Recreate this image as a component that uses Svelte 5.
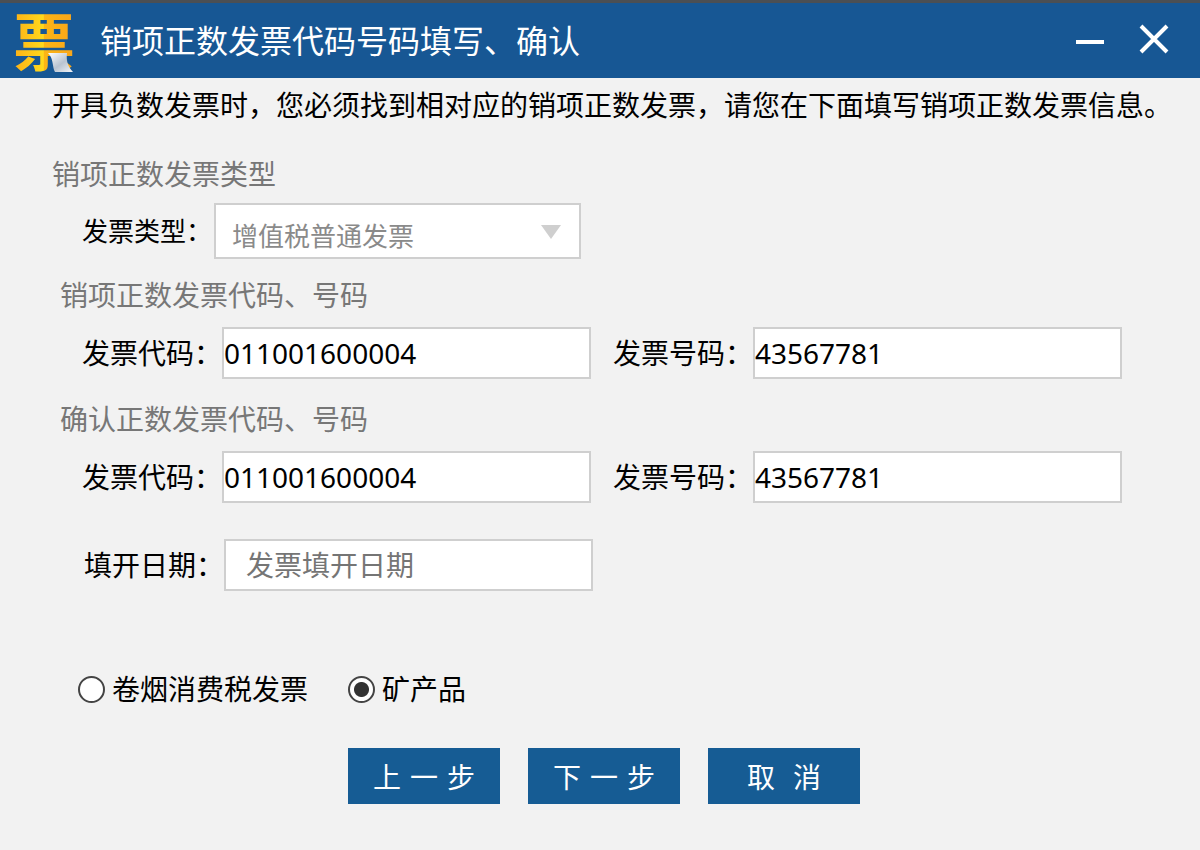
<script>
  let invoiceType = 'normal';
  let kind = 'mineral';
  let fillDate = '';

  let groups = [
    { id: 'first', title: '销项正数发票代码、号码', code: '011001600004', number: '43567781' },
    { id: 'confirm', title: '确认正数发票代码、号码', code: '011001600004', number: '43567781' }
  ];

  const kinds = [
    { value: 'tobacco', label: '卷烟消费税发票' },
    { value: 'mineral', label: '矿产品' }
  ];

  const actions = ['上 一 步', '下 一 步', '取  消'];
</script>

<main class="dialog">
  <header class="titlebar">
    <svg class="logo" viewBox="0 0 68 74" aria-hidden="true">
      <defs>
        <linearGradient id="gold" x1="0" y1="0" x2="1" y2="0">
          <stop offset="0" stop-color="#fbb017" />
          <stop offset="0.49" stop-color="#ffd91c" />
          <stop offset="0.5" stop-color="#fcb515" />
          <stop offset="1" stop-color="#f9a51b" />
        </linearGradient>
        <linearGradient id="paper" x1="0" y1="0" x2="1" y2="1">
          <stop offset="0" stop-color="#ffffff" />
          <stop offset="0.55" stop-color="#b9c3d0" />
          <stop offset="1" stop-color="#f4f6f9" />
        </linearGradient>
      </defs>
      <text class="logo-text" x="34" y="62" text-anchor="middle" fill="url(#gold)">票</text>
      <path d="M38 49 H57 C56 57 58 63 63 68 H45 C42 63 44 55 38 49 Z" fill="url(#paper)" />
    </svg>
    <h1>销项正数发票代码号码填写、确认</h1>
    <div class="win-btns">
      <button aria-label="最小化">
        <svg viewBox="0 0 30 30" width="30" height="30">
          <path d="M1 18 H29" stroke="#fff" stroke-width="4" />
        </svg>
      </button>
      <button aria-label="关闭">
        <svg viewBox="0 0 30 30" width="30" height="30">
          <path d="M2 2 L28 28 M28 2 L2 28" stroke="#fff" stroke-width="4" />
        </svg>
      </button>
    </div>
  </header>

  <p class="notice">开具负数发票时，您必须找到相对应的销项正数发票，请您在下面填写销项正数发票信息。</p>

  <h2 class="outer">销项正数发票类型</h2>
  <div class="row">
    <div class="field type">
      <label for="type">发票类型：</label>
      <div class="select-wrap">
        <select id="type" bind:value={invoiceType} disabled>
          <option value="normal">增值税普通发票</option>
        </select>
        <svg class="arrow" viewBox="0 0 20 14" aria-hidden="true">
          <path d="M0 0 H20 L10 14 Z" fill="#cfcfcf" />
        </svg>
      </div>
    </div>
  </div>

  {#each groups as group (group.id)}
    <section>
      <h2>{group.title}</h2>
      <div class="row">
        <div class="field">
          <label for="{group.id}-code">发票代码：</label>
          <input id="{group.id}-code" type="text" bind:value={group.code} />
        </div>
        <div class="field">
          <label for="{group.id}-number">发票号码：</label>
          <input id="{group.id}-number" type="text" bind:value={group.number} />
        </div>
      </div>
    </section>
  {/each}

  <div class="row date">
    <div class="field">
      <label for="date">填开日期：</label>
      <input id="date" type="text" placeholder="发票填开日期" bind:value={fillDate} />
    </div>
  </div>

  <div class="kinds">
    {#each kinds as k}
      <label>
        <input type="radio" name="kind" value={k.value} bind:group={kind} />
        <span>{k.label}</span>
      </label>
    {/each}
  </div>

  <div class="actions">
    {#each actions as action}
      <button>{action}</button>
    {/each}
  </div>
</main>

<style>
:global(body) {
  margin: 0;
  background: #f2f2f2;
}
.dialog {
  font-family: "Noto Sans", "Noto Sans CJK SC", sans-serif;
  font-size: 28px;
  line-height: 40px;
  color: #000;
  padding-bottom: 46px;
}
h1, h2, p {
  margin: 0;
  font-weight: 400;
}
input, select, button {
  font: inherit;
  box-sizing: border-box;
  border-radius: 0;
  margin: 0;
}

.titlebar {
  display: flex;
  align-items: center;
  height: 78px;
  box-sizing: border-box;
  border-top: 3px solid #4b4f54;
  padding: 0 31px 0 10px;
  background: #175794;
  color: #fff;
}
.logo {
  width: 68px;
  height: 74px;
  flex: none;
  overflow: visible;
}
.logo-text {
  font-family: "Noto Sans CJK SC", sans-serif;
  font-size: 62px;
  font-weight: 700;
}
h1 {
  flex: 1;
  margin-left: 22px;
  font-size: 32px;
}
.win-btns {
  display: flex;
  gap: 34px;
  padding-bottom: 4px;
}
.win-btns button {
  display: flex;
  padding: 0;
  border: none;
  background: transparent;
  cursor: pointer;
}

.notice {
  padding: 7px 0 0 52px;
  white-space: nowrap;
}
h2 {
  padding-left: 60px;
  font-size: 28px;
  color: #777;
}
h2 + .row {
  margin-top: 12px;
}
h2.outer {
  margin-top: 29px;
  padding-left: 52px;
}
h2.outer + .row {
  margin-top: 9px;
}
section {
  margin-top: 16px;
}
section + section {
  margin-top: 20px;
}

.row {
  display: grid;
  grid-template-columns: 1fr 1fr;
  gap: 22px;
  padding: 0 78px 0 82px;
}
.field {
  display: flex;
  align-items: center;
  min-width: 0;
}
.field label {
  flex: none;
  width: 140px;
  white-space: nowrap;
}
.field input {
  flex: 1;
  min-width: 0;
  height: 52px;
  padding: 0;
  border: 2px solid #cfcfcf;
  background: #fff;
  color: #000;
  outline: none;
}
.type {
  padding-right: 10px;
}
.type label {
  width: 132px;
  font-size: 26px;
}
.select-wrap {
  position: relative;
  flex: 1;
}
select {
  display: block;
  width: 100%;
  height: 56px;
  padding: 10px 40px 0 16px;
  border: 2px solid #cfcfcf;
  background: #fff;
  appearance: none;
  font-size: 26px;
  color: #8a8a8a;
  opacity: 1;
}
.arrow {
  position: absolute;
  right: 20px;
  top: 22px;
  width: 20px;
  height: 14px;
  pointer-events: none;
}
.row.date {
  margin-top: 36px;
  padding: 0 76px 0 84px;
}
.date input {
  padding-left: 20px;
}
.date input::placeholder {
  color: #757575;
  opacity: 1;
}

.kinds {
  display: flex;
  gap: 40px;
  margin-top: 78px;
  padding-left: 78px;
}
.kinds label {
  display: flex;
  align-items: center;
  gap: 7px;
}
.kinds input {
  appearance: none;
  width: 27px;
  height: 27px;
  border: 2px solid #444;
  border-radius: 50%;
  background: #fff;
}
.kinds input:checked {
  background: radial-gradient(circle, #333 0 7px, #fff 8px);
}

.actions {
  display: flex;
  justify-content: center;
  gap: 28px;
  margin-top: 39px;
  padding-left: 8px;
}
.actions button {
  width: 152px;
  height: 56px;
  padding: 6px 0 0;
  border: none;
  background: #165c94;
  color: #fff;
  font-family: "DejaVu Sans", "Noto Sans CJK SC", sans-serif;
  white-space: pre;
  cursor: pointer;
}
</style>
